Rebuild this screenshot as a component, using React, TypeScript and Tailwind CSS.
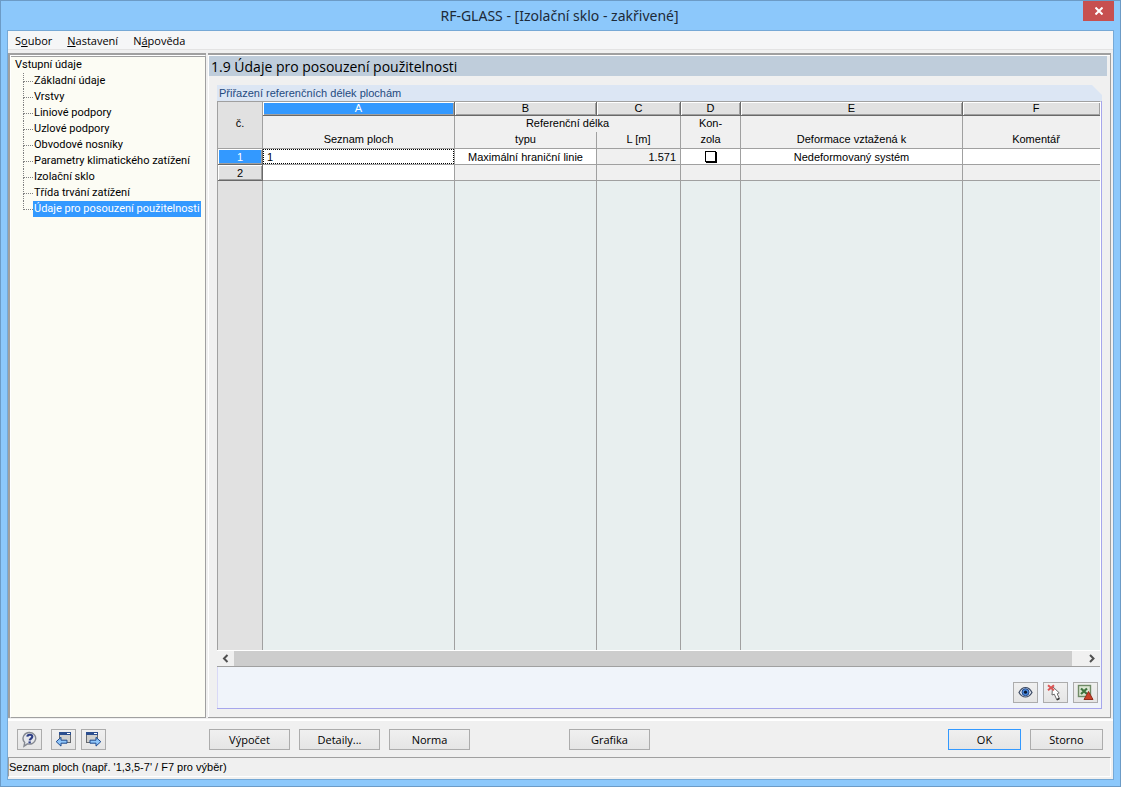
import { clsx } from 'clsx';
import type { ReactNode } from 'react';

const treeItems = [
    'Základní údaje',
    'Vrstvy',
    'Liniové podpory',
    'Uzlové podpory',
    'Obvodové nosníky',
    'Parametry klimatického zatížení',
    'Izolační sklo',
    'Třída trvání zatížení',
    'Údaje pro posouzení použitelnosti',
];

const columns = ['A', 'B', 'C', 'D', 'E', 'F'];

const HelpIcon = () => (
    <svg width="17" height="17" viewBox="0 0 17 17" aria-hidden="true">
        <path d="M9 1.5a6.300 5.800 0 1 1-2.500 11.300L3 15.200l.7-3.700A6.200 6 0 0 1 9 1.500Z" fill="#e6e8ec" stroke="#868a92" strokeWidth="1.400" />
        <path d="M6.300 5.600C6.500 3.300 11.300 3 11.300 5.600 11.300 7.500 8.900 7.600 8.700 9.400" fill="none" stroke="#2f3f86" strokeWidth="2.200" />
        <rect x="7.500" y="10.400" width="2.300" height="2" fill="#2f3f86" />
    </svg>
);

const StepIcon = ({ forward = false }: { forward?: boolean }) => (
    <svg width="17" height="17" viewBox="0 0 17 17" aria-hidden="true">
        <rect x={forward ? 1.5 : 4.5} y="1.500" width="11" height="10" fill="#d0d0ce" stroke="#66696e" />
        <path d={forward ? 'M1 1h12v3H1Z' : 'M4 1h12v3H4Z'} fill="#2c4f8f" />
        <path d={forward ? 'M9 2h3v1h-3Z' : 'M12 2h3v1h-3Z'} fill="#ffffff" />
        <path
            d={forward ? 'M5 9.200h6V6.300l4.800 4.400-4.800 4.400v-2.900H5Z' : 'M12 9.200H6V6.300L1.200 10.700 6 15.100v-2.900h6Z'}
            fill="#8fc6fa"
            stroke="#1f4a8f"
        />
    </svg>
);

const EyeIcon = () => (
    <svg width="15" height="15" viewBox="0 0 15 15" aria-hidden="true">
        <path d="M1 7.500Q3.500 2.500 7.500 2.500T14 7.500Q11.500 12 7.500 12T1 7.500Z" fill="#dfe6f1" stroke="#3c4a63" strokeWidth="1.200" />
        <circle cx="7.500" cy="7.200" r="3.500" fill="#4a8be0" stroke="#24498a" />
        <circle cx="7.500" cy="7.200" r="1.600" fill="#0b1730" />
    </svg>
);

const PickIcon = () => (
    <svg width="17" height="17" viewBox="0 0 17 17" aria-hidden="true">
        <path d="M5.500 2.500L5 11l2.300-.8 2.500 5.500 2.600-1.200-2.200-4.700 2-1Z" fill="#ffffff" stroke="#6b6b6b" />
        <path d="M9.800 15.700l2.600-1.200" stroke="#333333" strokeWidth="1.500" />
        <path d="M1 1.200l6 5M7 1.200l-6 5" stroke="#dc5555" strokeWidth="2" />
    </svg>
);

const ExcelIcon = () => (
    <svg width="17" height="17" viewBox="0 0 17 17" aria-hidden="true">
        <rect x="1.500" y="1.500" width="12" height="11" fill="#dbe6d3" stroke="#6f8a66" strokeWidth="1.400" />
        <path d="M4 4.500l6 5.500M10 4.500L4 10" stroke="#3f7440" strokeWidth="2.200" />
        <path d="M11.500 7.500l4.500 8H7Z" fill="#cc4028" stroke="#8f2b1d" />
    </svg>
);

const IconButton = ({ label, children }: { label: string; children: ReactNode }) => (
    <button
        type="button"
        aria-label={label}
        className="flex h-[21px] w-[25px] items-center justify-center border border-[#acacac] bg-linear-to-b from-[#f0f0f0] to-[#e5e5e5]"
    >
        {children}
    </button>
);

const PushButton = ({ primary, className, children }: { primary?: boolean; className: string; children: ReactNode }) => (
    <button
        type="button"
        className={clsx(
            'flex h-[21px] items-center justify-center border bg-linear-to-b from-[#f0f0f0] to-[#e5e5e5] pt-px',
            primary ? 'border-[#3399ff]' : 'border-[#acacac]',
            className,
        )}
    >
        {children}
    </button>
);

const Navigator = () => (
    <nav className="w-[198px] shrink-0 border-t-2 border-l-2 border-[#a0a0a0] font-[Roboto,sans-serif]">
        <div className="h-full border border-t-white border-r-[#a0a0a0] border-b-[#a0a0a0] border-l-white">
            <div className="h-full border-t border-[#a0a0a0] bg-[#fcfcf4] pl-1">
                <a href="#vstup" className="block h-4 leading-4">Vstupní údaje</a>
                <ul className="pl-2">
                    {treeItems.map((item, i) => {
                        const last = i === treeItems.length - 1;
                        return (
                            <li key={item} className="flex h-4">
                                <span className="w-[10px] shrink-0">
                                    <span className="block h-[9px] border-b border-l border-dotted border-[#808080]" />
                                    {!last && <span className="block h-[7px] border-l border-dotted border-[#808080]" />}
                                </span>
                                <a
                                    href={`#${i + 1}`}
                                    className={clsx('px-px leading-4 whitespace-nowrap', last && 'bg-[#3399ff] text-white')}
                                >
                                    {item}
                                </a>
                            </li>
                        );
                    })}
                </ul>
            </div>
        </div>
    </nav>
);

const line = 'border-r border-b border-[#a0a0a0]';
const column = 'border-r border-[#a0a0a0]';
const heading = 'p-0 pt-px font-normal';
const raised = 'border-r border-b border-[#696969] p-0 font-normal shadow-[inset_1px_1px_0_#ffffff,inset_-1px_-1px_0_#a0a0a0]';

const Grid = () => (
    <table className="h-full w-full table-fixed border-separate border-spacing-0 text-center font-['Liberation_Sans',sans-serif]">
        <colgroup>
            <col className="w-[45px]" />
            <col className="w-[192px]" />
            <col className="w-[142px]" />
            <col className="w-[84px]" />
            <col className="w-[60px]" />
            <col className="w-[222px]" />
            <col />
        </colgroup>
        <thead className="leading-[13px]">
            <tr className="h-[14px]">
                <th rowSpan={3} className={clsx(line, 'bg-[#e1e1e1] pb-1 font-normal')}>č.</th>
                {columns.map((c) => (
                    <th
                        key={c}
                        className={clsx(
                            raised,
                            'last:border-r-0 last:pl-[9px]',
                            c === 'A' ? 'bg-[#3399ff] text-white' : 'bg-[#e1e1e1]',
                        )}
                    >
                        {c}
                    </th>
                ))}
            </tr>
            <tr className="h-4 align-top">
                <th className={column} />
                <th colSpan={2} className={clsx(column, heading)}>Referenční délka</th>
                <th className={clsx(column, heading)}>Kon-</th>
                <th className={column} />
                <th />
            </tr>
            <tr className="h-[17px] align-top">
                <th className={clsx(line, heading)}>Seznam ploch</th>
                <th className={clsx(line, heading)}>typu</th>
                <th className={clsx(line, heading)}>L [m]</th>
                <th className={clsx(line, heading)}>zola</th>
                <th className={clsx(line, heading)}>Deformace vztažená k</th>
                <th className={clsx('border-b border-[#a0a0a0] pl-[9px]', 'pt-px pr-0 pb-0 font-normal')}>Komentář</th>
            </tr>
        </thead>
        <tbody className="leading-[14px]">
            <tr className="h-4 bg-white">
                <th className={clsx(raised, 'bg-[#3399ff] text-white')}>1</th>
                <td className={clsx(line, 'p-0')}>
                    <input
                        aria-label="Seznam ploch"
                        defaultValue="1"
                        className="block h-[15px] w-full border border-dotted border-black bg-white px-[3px] outline-none"
                    />
                </td>
                <td className={clsx(line, 'p-0 pt-px')}>Maximální hraniční linie</td>
                <td className={clsx(line, 'bg-[#f0f0f0] p-0 pt-px pr-1 text-right')}>1.571</td>
                <td className={clsx(line, 'p-0')}>
                    <input
                        type="checkbox"
                        aria-label="Konzola"
                        className="mx-auto block size-[11px] appearance-none border border-black bg-white shadow-[1px_1px_0_#000000]"
                    />
                </td>
                <td className={clsx(line, 'p-0 pt-px')}>Nedeformovaný systém</td>
                <td className="border-b border-[#a0a0a0] p-0" />
            </tr>
            <tr className="h-4">
                <th className={clsx(raised, 'bg-[#e1e1e1]')}>2</th>
                <td className={clsx(line, 'bg-white p-0')} />
                <td className={clsx(line, 'p-0')} />
                <td className={clsx(line, 'p-0')} />
                <td className={clsx(line, 'p-0')} />
                <td className={clsx(line, 'p-0')} />
                <td className="border-b border-[#a0a0a0] p-0" />
            </tr>
            <tr className="bg-[#e8efef]">
                <td className={clsx(column, 'bg-[#e1e1e1]')} />
                <td className={column} />
                <td className={column} />
                <td className={column} />
                <td className={column} />
                <td className={column} />
                <td />
            </tr>
        </tbody>
    </table>
);

const ScrollArrow = ({ label, d }: { label: string; d: string }) => (
    <button type="button" aria-label={label} className="flex w-4 items-center justify-center">
        <svg width="8" height="9" viewBox="0 0 8 9" aria-hidden="true">
            <path d={d} fill="none" stroke="#505050" strokeWidth="2" />
        </svg>
    </button>
);

const ReferenceLengths = () => (
    <section className="mt-[9px] mr-[5px] mb-2 ml-2 flex min-h-0 flex-1 flex-col">
        <h2 className="h-4 bg-[#dce6f4] pl-[2px] font-['Liberation_Sans',sans-serif] leading-4 text-[#1f4a80] [clip-path:polygon(0_0,calc(100%-10px)_0,100%_10px,100%_100%,0_100%)]">
            Přiřazení referenčních délek plochám
        </h2>
        <div className="flex min-h-0 flex-1 flex-col border-r border-b border-[#a6a6ec] bg-[#f0f4fa]">
            <div className="min-h-0 flex-1 border border-t-[#a0a0a0] border-r-white border-b-0 border-l-[#a0a0a0] bg-[#f0f0f0]">
                <Grid />
            </div>
            <div className="mr-px flex h-[17px] border-t border-b border-t-white border-b-[#a0a0a0] bg-[#f0f0f0] pl-px">
                <ScrollArrow label="Posunout vlevo" d="M5.500 1 2 4.500 5.500 8" />
                <div className="mr-3 flex-1 bg-[#cdcdcd]" />
                <ScrollArrow label="Posunout vpravo" d="M2 1l3.500 3.500L2 8" />
            </div>
            <div className="flex h-[41px] items-end justify-end gap-[5px] border-l border-[#d9d9f6] pr-[3px] pb-[5px]">
                <IconButton label="Zobrazit"><EyeIcon /></IconButton>
                <IconButton label="Vybrat"><PickIcon /></IconButton>
                <IconButton label="Export do Excelu"><ExcelIcon /></IconButton>
            </div>
        </div>
    </section>
);

const App = () => {
    return (
        <div className="flex h-screen flex-col border border-[#6c9bc6] bg-[#8cc8fb] px-[6px] pb-[6px] font-['Open_Sans',sans-serif] text-[11px] text-black">
            <header className="flex h-[29px] items-start">
                <h1 className="flex-1 pl-[29px] text-center font-['Noto_Sans',sans-serif] text-[14px] leading-[29px] text-[#1d2a38]">
                    RF-GLASS - [Izolační sklo - zakřivené]
                </h1>
                <button type="button" aria-label="Zavřít" className="flex h-5 w-[31px] items-center justify-center bg-[#c75050]">
                    <svg width="8" height="8" viewBox="0 0 8 8" aria-hidden="true">
                        <path d="M0.500 0.500l7 7M7.500 0.500l-7 7" stroke="#ffffff" strokeWidth="2" />
                    </svg>
                </button>
            </header>

            <main className="flex min-h-0 flex-1 flex-col border border-[#76a9d6] bg-[#f0f0f0]">
                <nav className="flex h-[19px] items-center gap-[15px] border-b border-[#e3e3e3] bg-[#f5f6f7] pt-[2px] pl-[7px]">
                    <button type="button">S<u>o</u>ubor</button>
                    <button type="button"><u>N</u>astavení</button>
                    <button type="button">N<u>á</u>pověda</button>
                </nav>

                <div className="mt-[3px] flex min-h-0 flex-1 gap-[2px] pr-[2px]">
                    <Navigator />
                    <div className="flex min-w-0 flex-1 flex-col border-t-2 border-r border-b border-[#a0a0a0]">
                        <div className="flex min-h-0 flex-1 flex-col border-t border-l border-white pr-[3px]">
                            <h2 className="h-5 bg-[#bfcddb] pl-[2px] text-[14px] leading-[21px]">
                                1.9 Údaje pro posouzení použitelnosti
                            </h2>
                            <ReferenceLengths />
                        </div>
                    </div>
                </div>

                <footer>
                    <div className="mt-px flex border-t-2 border-white pt-2 pr-[10px] pb-[7px] pl-[9px]">
                        <IconButton label="Nápověda"><HelpIcon /></IconButton>
                        <div className="ml-[9px] flex gap-[5px]">
                            <IconButton label="Předchozí"><StepIcon /></IconButton>
                            <IconButton label="Další"><StepIcon forward /></IconButton>
                        </div>
                        <div className="ml-[103px] flex gap-[9px]">
                            <PushButton className="w-[81px]">Výpočet</PushButton>
                            <PushButton className="w-[81px]">Detaily...</PushButton>
                            <PushButton className="w-[81px]">Norma</PushButton>
                        </div>
                        <PushButton className="ml-[99px] w-[81px]">Grafika</PushButton>
                        <div className="ml-auto flex gap-[9px]">
                            <PushButton primary className="w-[73px]">OK</PushButton>
                            <PushButton className="w-[73px]">Storno</PushButton>
                        </div>
                    </div>
                    <p className="mr-[2px] mb-[2px] h-5 border border-t-[#a0a0a0] border-r-white border-b-white border-l-[#a0a0a0] font-['Liberation_Sans',sans-serif] leading-[18px]">
                        Seznam ploch (např. '1,3,5-7' / F7 pro výběr)
                    </p>
                </footer>
            </main>
        </div>
    );
};

export default App;
